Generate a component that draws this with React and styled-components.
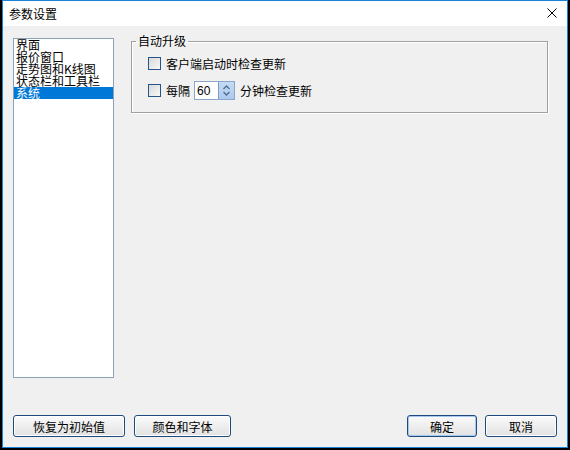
import React from 'react';
import styled, { createGlobalStyle } from 'styled-components';

const GlobalStyle = createGlobalStyle`
  html, body {
    margin: 0;
    padding: 0;
    background: #000;
  }
  body {
    font-family: "Noto Sans CJK SC", "Liberation Sans", sans-serif;
    font-size: 12px;
    color: #000;
  }
`;

const Dialog = styled.div`
  box-sizing: border-box;
  width: 566px;
  height: 448px;
  margin-left: 2px;
  border: 1px solid #1883d7;
  background: #f0f0f0;
  display: flex;
  flex-direction: column;
`;

const TitleBar = styled.div`
  height: 25px;
  background: #fff;
  display: flex;
  align-items: center;
  justify-content: space-between;
  padding: 0 10px 0 6px;
  font-size: 12px;
`;

const CloseButton = styled.button`
  border: 0;
  background: none;
  padding: 0;
  width: 10px;
  height: 10px;
  display: flex;
  margin-bottom: 1px;
`;

const Body = styled.div`
  flex: 1;
  display: flex;
  flex-direction: column;
  padding: 12px 10px 10px 10px;
`;

const Main = styled.div`
  display: flex;
  align-items: flex-start;
  gap: 17px;
  height: 340px;
`;

const ListBox = styled.ul`
  box-sizing: border-box;
  width: 101px;
  height: 340px;
  margin: 0;
  padding: 0;
  list-style: none;
  background: #fff;
  border: 1px solid #8ba2bb;
`;

const ListItem = styled.li`
  position: relative;
  height: 12px;
  line-height: 12px;
  padding-left: 2px;
  white-space: nowrap;
  background: ${p => (p.$active ? '#0078d7' : 'transparent')};
  color: ${p => (p.$active ? '#fff' : '#000')};
`;

const Group = styled.fieldset`
  flex: 1;
  margin: -4px 9px 0 0;
  padding: 6px 0 12px 15px;
  border: 1px solid #a0a0a0;
  box-shadow: 1px 1px 0 #fff, inset 1px 1px 0 #fff;
  display: flex;
  flex-direction: column;
  gap: 8px;
`;

const Legend = styled.legend`
  padding: 0 2px;
  margin-left: -11px;
  line-height: 14px;
`;

const Row = styled.label`
  display: flex;
  align-items: center;
  height: 19px;
  gap: 5px;
`;

const Check = styled.input`
  appearance: none;
  box-sizing: border-box;
  width: 13px;
  height: 13px;
  margin: 0 0 0 1px;
  border: 1px solid #24568a;
  background: linear-gradient(135deg, #d8d8d8, #f8f8f8);
`;

const Spin = styled.div`
  display: flex;
  box-sizing: border-box;
  width: 41px;
  height: 19px;
  margin: 0 0 0 -1px;
  border: 1px solid #8aa6c8;
  background: #fff;
`;

const SpinInput = styled.input`
  box-sizing: border-box;
  width: 23px;
  border: 0;
  padding: 0 0 0 2px;
  font-family: "Liberation Sans", sans-serif;
  font-size: 12px;
  background: transparent;
  outline: none;
`;

const SpinButtons = styled.div`
  flex: 1;
  background: linear-gradient(#c4dbf5, #adc9ec);
  border-left: 1px solid #7c9cc6;
  display: flex;
  align-items: center;
  justify-content: center;
`;

const Footer = styled.div`
  margin-top: auto;
  display: flex;
  align-items: center;
`;

const Button = styled.button`
  box-sizing: border-box;
  height: 22px;
  width: ${p => p.$w}px;
  margin-left: ${p => p.$gap || 0}px;
  padding: 0;
  font-family: "Noto Sans CJK SC", sans-serif;
  font-size: 12px;
  color: #000;
  border: 1px solid #1d4b7c;
  border-radius: 3px;
  background: linear-gradient(#fbfbfb, #eeeeee 50%, #e2e2e2);
  box-shadow: ${p => (p.$default ? 'inset 0 0 0 1px #a6c8ee' : 'inset 0 0 0 1px #fff')};
`;

const Spacer = styled.div`
  flex: 1;
`;

const pages = ['界面', '报价窗口', '走势图和K线图', '状态栏和工具栏', '系统'];

export default function App() {
  return (
    <>
      <GlobalStyle />
      <Dialog>
        <TitleBar>
          <span>参数设置</span>
          <CloseButton aria-label="关闭">
            <svg width="10" height="10" viewBox="0 0 10 10">
              <path d="M0.5 0.5 L9.5 9.5 M9.5 0.5 L0.5 9.5" stroke="#000" strokeWidth="1" />
            </svg>
          </CloseButton>
        </TitleBar>
        <Body>
          <Main>
            <ListBox>
              {pages.map(name => (
                <ListItem key={name} $active={name === '系统'}>
                  {name}
                </ListItem>
              ))}
            </ListBox>
            <Group>
              <Legend>自动升级</Legend>
              <Row>
                <Check type="checkbox" />
                <span>客户端启动时检查更新</span>
              </Row>
              <Row>
                <Check type="checkbox" />
                <span>每隔</span>
                <Spin>
                  <SpinInput defaultValue="60" />
                  <SpinButtons>
                    <svg width="7" height="11" viewBox="0 0 7 11">
                      <path d="M0.5 4 L3.5 1 L6.5 4 M0.5 7 L3.5 10 L6.5 7" stroke="#4d6d94" strokeWidth="1.3" fill="none" />
                    </svg>
                  </SpinButtons>
                </Spin>
                <span>分钟检查更新</span>
              </Row>
            </Group>
          </Main>
          <Footer>
            <Button $w={112}>恢复为初始值</Button>
            <Button $w={97} $gap={9}>颜色和字体</Button>
            <Spacer />
            <Button $w={70} $default>确定</Button>
            <Button $w={72} $gap={8}>取消</Button>
          </Footer>
        </Body>
      </Dialog>
    </>
  );
}
